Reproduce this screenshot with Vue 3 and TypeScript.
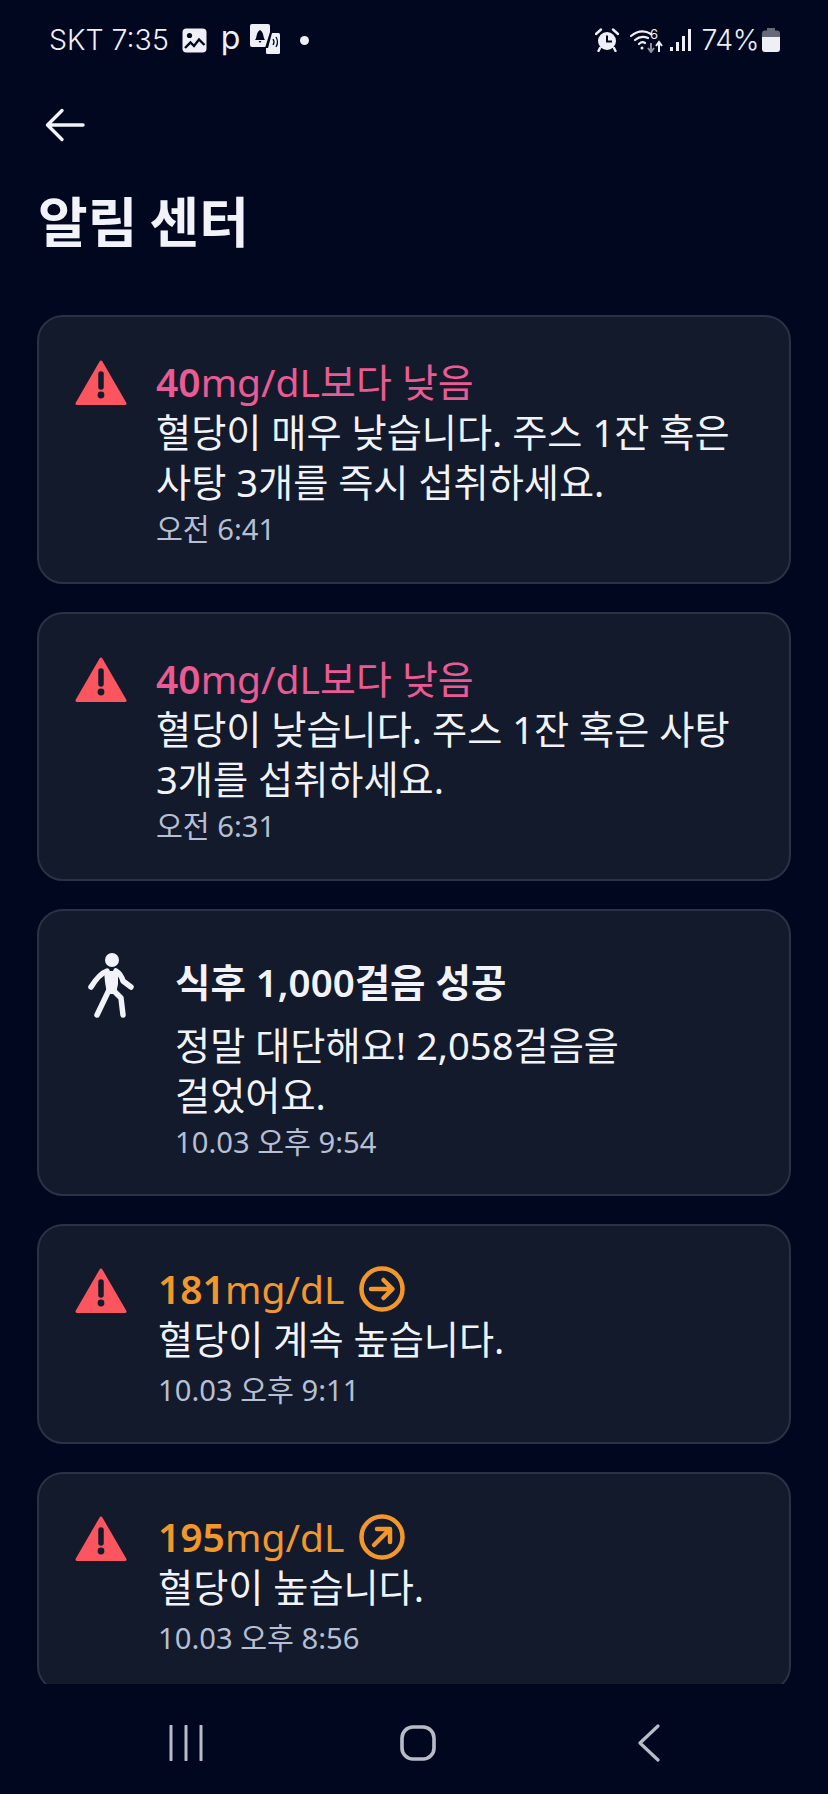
<script setup lang="ts">
interface Alert {
  icon: 'warn' | 'walk'
  tone: 'pink' | 'orange' | 'plain'
  strong: string
  rest: string
  trend?: 'right' | 'upright'
  lines: string[]
  time: string
}

const alerts: Alert[] = [
  { icon: 'warn', tone: 'pink', strong: '40', rest: 'mg/dL보다 낮음', lines: ['혈당이 매우 낮습니다. 주스 1잔 혹은', '사탕 3개를 즉시 섭취하세요.'], time: '오전 6:41' },
  { icon: 'warn', tone: 'pink', strong: '40', rest: 'mg/dL보다 낮음', lines: ['혈당이 낮습니다. 주스 1잔 혹은 사탕', '3개를 섭취하세요.'], time: '오전 6:31' },
  { icon: 'walk', tone: 'plain', strong: '식후 1,000걸음 성공', rest: '', lines: ['정말 대단해요! 2,058걸음을', '걸었어요.'], time: '10.03 오후 9:54' },
  { icon: 'warn', tone: 'orange', strong: '181', rest: 'mg/dL', trend: 'right', lines: ['혈당이 계속 높습니다.'], time: '10.03 오후 9:11' },
  { icon: 'warn', tone: 'orange', strong: '195', rest: 'mg/dL', trend: 'upright', lines: ['혈당이 높습니다.'], time: '10.03 오후 8:56' },
]
</script>

<template>
  <div class="screen">
    <header class="status">
      <div class="status-side">
        <span class="status-text">SKT 7:35</span>
        <svg class="ic-image" viewBox="0 0 25 25" width="25" height="25">
          <rect x="0.5" y="0.5" width="24" height="24" rx="4" fill="#eef0f6" />
          <circle cx="7.500" cy="7.500" r="2.600" fill="#020720" />
          <path d="M3 20 L8.500 14.500 L12 18 L17 11.500 L22.500 17" fill="none" stroke="#020720" stroke-width="2.400" />
        </svg>
        <span class="status-p">p</span>
        <svg class="ic-trans" viewBox="0 0 30 30" width="30" height="30">
          <rect x="0" y="0" width="20" height="23" rx="2" fill="#eef0f6" />
          <rect x="16" y="9" width="14" height="21" rx="1.500" fill="#eef0f6" />
          <path d="M15 24 L20 8 L22 9 L18 24 Z" fill="#020720" />
          <path d="M5 16 C7 14 6 8 10 6 C14 8 13 14 15 16 Z M8.500 17 H11.500 L10 19 Z" fill="#020720" />
          <path d="M23 15 Q25 18 23 21 M26 13 Q29 18 26 23" fill="none" stroke="#020720" stroke-width="1.300" />
        </svg>
        <span class="status-dot"></span>
      </div>
      <div class="status-side right">
        <svg class="ic-alarm" viewBox="0 0 24 24" width="24" height="24">
          <circle cx="12" cy="13" r="9" fill="#eef0f6" />
          <path d="M1 6 L6 1.500 M23 6 L18 1.500 M5 20 L3.500 23 M19 20 L20.500 23" stroke="#eef0f6" stroke-width="2.400" stroke-linecap="round" />
          <path d="M12 7.500 V13.500 H17" fill="none" stroke="#020720" stroke-width="2" />
        </svg>
        <svg class="ic-wifi" viewBox="0 0 34 26" width="34" height="26">
          <path d="M1 9 Q11 1 21 7 M5 13 Q11 8 18 11 M9 17 Q12 14 15 16" fill="none" stroke="#eef0f6" stroke-width="2.200" stroke-linecap="round" />
          <circle cx="12" cy="21" r="1.500" fill="#eef0f6" />
          <text x="20" y="12" class="wifi-six">6</text>
          <path d="M21 16 V24 M18 21 L21 25 L24 21" fill="none" stroke="#8b8f9f" stroke-width="2" />
          <path d="M29 25 V16 M26 19 L29 15 L32 19" fill="none" stroke="#eef0f6" stroke-width="2" />
        </svg>
        <svg class="ic-signal" viewBox="0 0 22 24" width="22" height="24">
          <rect x="0" y="19" width="3" height="4" fill="#eef0f6" />
          <rect x="6" y="14" width="3" height="9" fill="#eef0f6" />
          <rect x="12" y="8" width="3" height="15" fill="#eef0f6" />
          <rect x="18" y="1" width="3" height="22" fill="#eef0f6" />
        </svg>
        <span class="status-text pct">74%</span>
        <svg class="ic-batt" viewBox="0 0 18 24" width="18" height="24">
          <path d="M5 0 H13 V2.500 H15 Q18 2.500 18 5.500 V9 H0 V5.500 Q0 2.500 3 2.500 H5 Z" fill="#666a78" />
          <path d="M0 9 H18 V21 Q18 24 15 24 H3 Q0 24 0 21 Z" fill="#eef0f6" />
        </svg>
      </div>
    </header>

    <div class="topbar">
      <svg viewBox="0 0 40 34" width="40" height="34">
        <path d="M38 17 H3 M17 2.500 L2.500 17 L17 31.500" fill="none" stroke="#f1f3f9" stroke-width="3.400" stroke-linecap="round" stroke-linejoin="round" />
      </svg>
    </div>

    <h1 class="title">알림 센터</h1>

    <main class="list">
      <article v-for="(a, i) in alerts" :key="i" class="card" :class="[`card-${i}`, a.icon]">
        <div class="icon-col">
          <svg v-if="a.icon === 'warn'" viewBox="0 0 52 46" width="52" height="46">
            <path d="M26 2 L50 43.500 H2 Z" fill="#fb5560" stroke="#fb5560" stroke-width="3" stroke-linejoin="round" />
            <path d="M26 14 V27" stroke="#121a2c" stroke-width="5.500" stroke-linecap="round" />
            <circle cx="26" cy="35" r="3.400" fill="#121a2c" />
          </svg>
          <svg v-else viewBox="0 0 46 66" width="46" height="66">
            <circle cx="24" cy="8" r="7" fill="#f1f3f9" />
            <path d="M16 19 H30 L30 32 L28 42 H19 L17 30 Z" fill="#f1f3f9" />
            <path d="M19 19 Q11 22 3 35 M28 19 Q33 22 35 29 L43 35 M21 38 L9 63 M25 38 L33 46 L35 63" fill="none" stroke="#f1f3f9" stroke-width="5.500" stroke-linecap="round" stroke-linejoin="round" />
          </svg>
        </div>
        <div class="body">
          <div class="head" :class="a.tone">
            <b>{{ a.strong }}</b><span>{{ a.rest }}</span>
            <svg v-if="a.trend" class="trend" viewBox="0 0 46 46" width="46" height="46">
              <circle cx="23" cy="23" r="20.500" fill="none" stroke="#f2982b" stroke-width="4.500" />
              <path v-if="a.trend === 'right'" d="M12 23 H33 M24.500 14 L33.500 23 L24.500 32" fill="none" stroke="#f2982b" stroke-width="4.500" stroke-linecap="round" stroke-linejoin="round" />
              <path v-else d="M15 31 L30 16 M18 15 H31 V28" fill="none" stroke="#f2982b" stroke-width="4.500" stroke-linecap="round" stroke-linejoin="round" />
            </svg>
          </div>
          <div v-for="line in a.lines" :key="line" class="line">{{ line }}</div>
          <div class="time">{{ a.time }}</div>
        </div>
      </article>
    </main>

    <nav class="navbar">
      <svg viewBox="0 0 34 36" width="34" height="36">
        <path d="M2 1 V35 M17 1 V35 M32 1 V35" stroke="#b9bcc6" stroke-width="3" stroke-linecap="round" />
      </svg>
      <svg class="home" viewBox="0 0 36 36" width="36" height="36">
        <rect x="2" y="2" width="32" height="32" rx="11" fill="none" stroke="#b9bcc6" stroke-width="3.600" />
      </svg>
      <svg viewBox="0 0 24 38" width="24" height="38">
        <path d="M21 2 L3 19 L21 36" fill="none" stroke="#b9bcc6" stroke-width="3.200" stroke-linecap="round" stroke-linejoin="round" />
      </svg>
    </nav>
  </div>
</template>

<style>
html, body { margin: 0; background: #020720; }
</style>

<style scoped>
.screen {
  width: 828px;
  height: 1794px;
  background: #020720;
  display: flex;
  flex-direction: column;
  overflow: hidden;
  font-family: "Noto Sans", "Noto Sans CJK KR", sans-serif;
  color: #f1f3f9;
}
.status {
  height: 80px;
  flex: none;
  padding: 0 48px 0 49px;
  display: flex;
  justify-content: space-between;
  align-items: center;
}
.status-side { display: flex; align-items: center; }
.status-text {
  font-family: "Inter", "Noto Sans", sans-serif;
  font-size: 28.500px;
  font-weight: 300;
  color: #eef0f6;
  line-height: 34px;
  white-space: nowrap;
}
.ic-image { margin-left: 13px; }
.status-p {
  margin-left: 14px;
  font-family: "Inter", sans-serif;
  font-size: 32px;
  line-height: 30px;
  color: #eef0f6;
  position: relative;
  top: -2px;
}
.ic-trans { margin-left: 10px; position: relative; top: -1px; }
.status-dot {
  width: 9px; height: 9px; border-radius: 50%;
  background: #eef0f6;
  margin-left: 20px;
}
.ic-alarm { margin-right: 11px; }
.ic-wifi { margin-right: 6px; }
.ic-signal { margin-right: 10px; }
.pct { letter-spacing: -0.5px; margin-right: 3px; }
.wifi-six { font-family: "Inter", sans-serif; font-size: 13px; fill: #eef0f6; }

.topbar { height: 50px; flex: none; padding: 2px 0 0 45px; box-sizing: border-box; margin-top: 26px; }
.title {
  margin: 33px 0 0 38px;
  height: 62px;
  flex: none;
  font-size: 54px;
  line-height: 62px;
  font-weight: 700;
  color: #f1f3f9;
  font-family: "Noto Sans CJK KR", sans-serif;
}
.list {
  flex: 1;
  min-height: 0;
  margin: 64px 37px 0;
  overflow: hidden;
  display: flex;
  flex-direction: column;
  gap: 28px;
}
.card {
  flex: none;
  box-sizing: border-box;
  border: 2px solid #2a3245;
  background: #121a2c;
  border-radius: 26px;
  display: flex;
  padding: 39px 24px 0 36px;
}
.card-0, .card-1 { height: 269px; }
.card-2 { height: 287px; padding-top: 45px; }
.card-3, .card-4 { height: 220px; padding-top: 37px; }
.icon-col { width: 81px; flex: none; padding-top: 4px; }
.card-3 .icon-col, .card-4 .icon-col { padding-top: 5px; }
.walk .icon-col { width: 100px; padding: 0 0 0 13px; margin-top: -4px; box-sizing: border-box; }
.body { flex: 1; min-width: 0; }
.card-3 .body, .card-4 .body { padding-left: 2px; }
.head {
  display: flex;
  align-items: center;
  height: 52px;
  font-size: 39px;
  line-height: 52px;
  white-space: nowrap;
}
.head b { font-weight: 600; }
.pink { color: #ea5b93; }
.orange { color: #f2982b; }
.plain { color: #f1f3f9; height: 52px; margin-bottom: 13px; }
.plain b { font-weight: 600; font-size: 38.500px; }
.trend { margin-left: 15px; }
.line {
  font-size: 38.200px;
  line-height: 49.500px;
  color: #f1f3f9;
  white-space: nowrap;
}
.time {
  font-size: 29.200px;
  line-height: 44px;
  margin-top: 0;
  color: #b6bfd3;
  white-space: nowrap;
}
.card-3 .time, .card-4 .time { margin-top: 3px; }
.navbar {
  height: 110px;
  flex: none;
  display: flex;
  justify-content: space-between;
  align-items: center;
  padding: 8px 167px 0 169px;
  box-sizing: border-box;
}
.home { margin-left: -4px; }
</style>
